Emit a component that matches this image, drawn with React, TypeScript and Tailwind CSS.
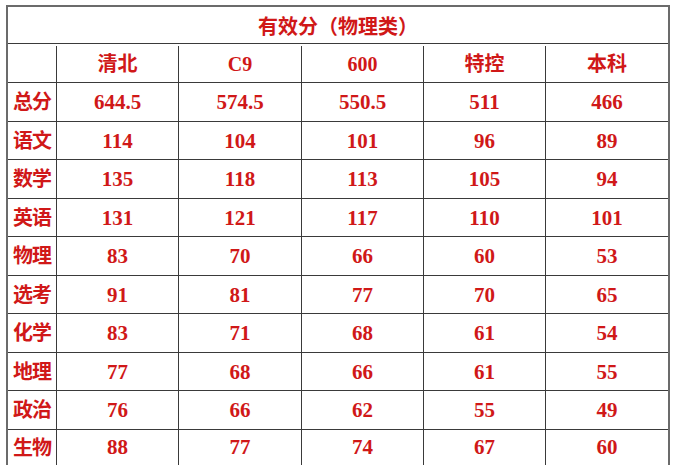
const COLS = ["清北", "C9", "600", "特控", "本科"];

const ROWS: [string, string[]][] = [
  ["总分", ["644.5", "574.5", "550.5", "511", "466"]],
  ["语文", ["114", "104", "101", "96", "89"]],
  ["数学", ["135", "118", "113", "105", "94"]],
  ["英语", ["131", "121", "117", "110", "101"]],
  ["物理", ["83", "70", "66", "60", "53"]],
  ["选考", ["91", "81", "77", "70", "65"]],
  ["化学", ["83", "71", "68", "61", "54"]],
  ["地理", ["77", "68", "66", "61", "55"]],
  ["政治", ["76", "66", "62", "55", "49"]],
  ["生物", ["88", "77", "74", "67", "60"]],
];

const font = "font-['Liberation_Serif','Noto_Sans_CJK_SC',serif]";

export default function App() {
  return (
    <div className="w-[677px] h-[475px] bg-white pt-[5px] pl-[6px]">
      <div className={`w-[664px] border-t-2 border-l-2 border-r-2 border-[#6b6b6b] text-[#d01818] font-bold ${font}`}>
        <div className="h-[37px] pt-[4px] flex items-center justify-center border-b border-[#3a3a3a] text-[20px]">
          有效分（物理类）
        </div>
        <div className="grid grid-cols-[49px_122px_123px_122px_122px_122px] h-[39px] pt-[2px] border-b border-[#3a3a3a] text-[20px]">
          <div className="border-r border-[#3a3a3a]" />
          {COLS.map((c, i) => (
            <div key={c} className={`flex items-center justify-center ${i < 4 ? "border-r border-[#3a3a3a]" : ""}`}>
              {c}
            </div>
          ))}
        </div>
        {ROWS.map(([label, vals], r) => (
          <div
            key={label}
            className={`grid grid-cols-[49px_122px_123px_122px_122px_122px] ${r === 9 ? "h-[35px]" : "h-[38.5px] border-b border-[#3a3a3a]"}`}
          >
            <div className="flex items-center justify-center pt-[1px] border-r border-[#3a3a3a] text-[20px] tracking-[-1px]">
              {label}
            </div>
            {vals.map((v, i) => (
              <div key={i} className={`flex items-center justify-center pt-[2px] text-[21px] ${i < 4 ? "border-r border-[#3a3a3a]" : ""}`}>
                {v}
              </div>
            ))}
          </div>
        ))}
      </div>
    </div>
  );
}
